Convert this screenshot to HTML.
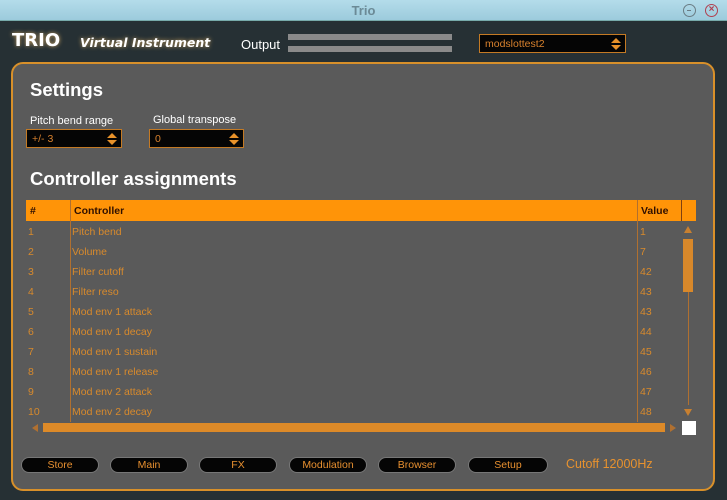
<!DOCTYPE html>
<html><head><style>
*{margin:0;padding:0;box-sizing:border-box}
body{width:727px;height:500px;background:#263034;font-family:"Liberation Sans",sans-serif;position:relative;overflow:hidden}
.a{position:absolute}
.title{left:0;top:0;width:727px;height:21px;background:linear-gradient(#b4dcea,#9ccbdc);border-bottom:1px solid #7aa;text-align:center;font-weight:bold;font-size:13px;color:#6b8a96;line-height:22px}
.panel{left:11px;top:62px;width:704px;height:429px;background:#5a5a5a;border:2px solid #d8902a;border-radius:12px}
.dd{background:#050505;border:1px solid #c47a24;color:#d9822e;font-size:10.5px;line-height:19px;padding-left:5px}
.dd:after{content:"";position:absolute;right:4px;top:3px;border-left:5px solid transparent;border-right:5px solid transparent;border-bottom:5px solid #e8922a}
.dd:before{content:"";position:absolute;right:4px;top:10px;border-left:5px solid transparent;border-right:5px solid transparent;border-top:5px solid #e8922a}
.lbl{color:#fff;font-size:11px}
.h{color:#fff;font-weight:bold;font-size:18.5px}
.row{left:26px;width:612px;height:20px;font-size:10.5px;color:#d88a2c;line-height:20px}
.btn{top:457px;width:78px;height:16px;background:#050505;border:1px solid #777;border-radius:8px;color:#e89030;font-size:10.5px;text-align:center;line-height:15px}
</style></head><body>
<div class="a title">Trio</div>
<div class="a" style="left:683px;top:4px;width:13px;height:13px;border:1.5px solid #6a7c84;border-radius:50%"><div class="a" style="left:3px;top:4.5px;width:4px;height:1.5px;background:#6a7c84"></div></div>
<div class="a" style="left:705px;top:4px;width:13px;height:13px;border:1.5px solid #b04050;border-radius:50%;color:#b04050;font-size:10px;line-height:10px;text-align:center;font-weight:bold">×</div>
<div class="a" style="left:12px;top:30px;font-family:'DejaVu Sans',sans-serif;font-weight:bold;font-size:18px;color:#fff;text-shadow:0 0 4px #c8a060">TRIO</div>
<div class="a" style="left:80px;top:35px;font-family:'DejaVu Sans',sans-serif;font-weight:bold;font-style:italic;font-size:12.5px;color:#fff;text-shadow:0 0 4px #c8a060">Virtual Instrument</div>
<div class="a" style="left:241px;top:37px;color:#fff;font-size:13px">Output</div>
<div class="a" style="left:288px;top:34px;width:164px;height:6px;background:#8a8a8a"></div>
<div class="a" style="left:288px;top:46px;width:164px;height:6px;background:#8a8a8a"></div>
<div class="a dd" style="left:479px;top:34px;width:147px;height:19px">modslottest2</div>
<div class="a panel"></div>
<div class="a h" style="left:30px;top:79px">Settings</div>
<div class="a lbl" style="left:30px;top:115px">Pitch bend range</div>
<div class="a lbl" style="left:153px;top:114px">Global transpose</div>
<div class="a dd" style="left:26px;top:129px;width:96px;height:19px">+/- 3</div>
<div class="a dd" style="left:149px;top:129px;width:95px;height:19px">0</div>
<div class="a h" style="left:30px;top:168px">Controller assignments</div>
<div class="a" style="left:26px;top:200px;width:670px;height:21px;background:#ff9408"></div>
<div class="a" style="left:70px;top:200px;width:1px;height:222px;background:#b07030"></div>
<div class="a" style="left:637px;top:200px;width:1px;height:222px;background:#b07030"></div>
<div class="a" style="left:681px;top:200px;width:1px;height:21px;background:#804010"></div>
<div class="a" style="left:30px;top:205px;font-size:10.5px;font-weight:bold;color:#301000">#</div>
<div class="a" style="left:74px;top:205px;font-size:10.5px;font-weight:bold;color:#301000">Controller</div>
<div class="a" style="left:641px;top:205px;font-size:10.5px;font-weight:bold;color:#301000">Value</div>
<div class="a row" style="top:222px"><span class="a" style="left:2px">1</span><span class="a" style="left:46px">Pitch bend</span><span class="a" style="left:614px">1</span></div>
<div class="a row" style="top:242px"><span class="a" style="left:2px">2</span><span class="a" style="left:46px">Volume</span><span class="a" style="left:614px">7</span></div>
<div class="a row" style="top:262px"><span class="a" style="left:2px">3</span><span class="a" style="left:46px">Filter cutoff</span><span class="a" style="left:614px">42</span></div>
<div class="a row" style="top:282px"><span class="a" style="left:2px">4</span><span class="a" style="left:46px">Filter reso</span><span class="a" style="left:614px">43</span></div>
<div class="a row" style="top:302px"><span class="a" style="left:2px">5</span><span class="a" style="left:46px">Mod env 1 attack</span><span class="a" style="left:614px">43</span></div>
<div class="a row" style="top:322px"><span class="a" style="left:2px">6</span><span class="a" style="left:46px">Mod env 1 decay</span><span class="a" style="left:614px">44</span></div>
<div class="a row" style="top:342px"><span class="a" style="left:2px">7</span><span class="a" style="left:46px">Mod env 1 sustain</span><span class="a" style="left:614px">45</span></div>
<div class="a row" style="top:362px"><span class="a" style="left:2px">8</span><span class="a" style="left:46px">Mod env 1 release</span><span class="a" style="left:614px">46</span></div>
<div class="a row" style="top:382px"><span class="a" style="left:2px">9</span><span class="a" style="left:46px">Mod env 2 attack</span><span class="a" style="left:614px">47</span></div>
<div class="a row" style="top:402px"><span class="a" style="left:2px">10</span><span class="a" style="left:46px">Mod env 2 decay</span><span class="a" style="left:614px">48</span></div>
<div class="a" style="left:688px;top:240px;width:1px;height:165px;background:#b07030"></div>
<div class="a" style="left:684px;top:226px;border-left:4px solid transparent;border-right:4px solid transparent;border-bottom:7px solid #c88030"></div>
<div class="a" style="left:683px;top:239px;width:10px;height:53px;background:#d8882a"></div>
<div class="a" style="left:684px;top:409px;border-left:4px solid transparent;border-right:4px solid transparent;border-top:7px solid #c88030"></div>
<div class="a" style="left:43px;top:423px;width:622px;height:9px;background:#dd8a28"></div>
<div class="a" style="left:32px;top:424px;border-top:4px solid transparent;border-bottom:4px solid transparent;border-right:6px solid #b07030"></div>
<div class="a" style="left:670px;top:424px;border-top:4px solid transparent;border-bottom:4px solid transparent;border-left:6px solid #b07030"></div>
<div class="a" style="left:682px;top:421px;width:14px;height:14px;background:#fff"></div>
<div class="a btn" style="left:21px">Store</div>
<div class="a btn" style="left:110px">Main</div>
<div class="a btn" style="left:199px">FX</div>
<div class="a btn" style="left:289px">Modulation</div>
<div class="a btn" style="left:378px">Browser</div>
<div class="a btn" style="left:468px;width:80px">Setup</div>
<div class="a" style="left:566px;top:457px;color:#e8922e;font-size:12.5px">Cutoff 12000Hz</div>
</body></html>
